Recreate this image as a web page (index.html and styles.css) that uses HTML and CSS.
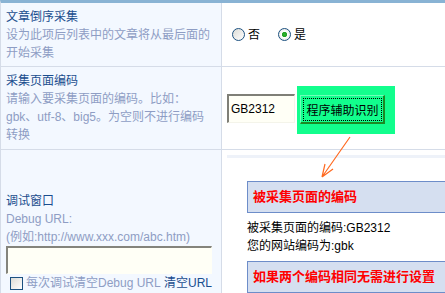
FILE: index.html
```html
<!DOCTYPE html>
<html lang="zh-CN">
<head>
    <meta charset="UTF-8">
    <title>采集设置</title>
    <link rel="stylesheet" href="styles.css">
</head>
<body>
    <div class="wrap">
        <table class="config">
            <tr class="row-reverse">
                <td class="label">
                    <div class="title">文章倒序采集</div>
                    <div class="desc">设为此项后列表中的文章将从最后面的开始采集</div>
                </td>
                <td class="field">
                    <div class="radios">
                        <label class="opt"><input type="radio" name="reverse">否</label>
                        <label class="opt"><input type="radio" name="reverse" checked>是</label>
                    </div>
                </td>
            </tr>
            <tr class="row-charset">
                <td class="label">
                    <div class="title">采集页面编码</div>
                    <div class="desc">请输入要采集页面的编码。比如：gbk、utf-8、big5。为空则不进行编码转换</div>
                </td>
                <td class="field">
                    <div class="charset">
                        <input type="text" class="charset-input" value="GB2312">
                        <span class="detect"><button type="button"><span>程序辅助识别</span></button></span>
                    </div>
                </td>
            </tr>
            <tr class="row-debug">
                <td class="label">
                    <div class="title">调试窗口</div>
                    <div class="desc">Debug URL:<br>(例如:http://www.xxx.com/abc.htm)</div>
                    <textarea class="debug-url"></textarea>
                    <div class="debug-opts">
                        <label class="check"><input type="checkbox">每次调试清空Debug URL</label>
                        <a href="#" class="clear">清空URL</a>
                    </div>
                </td>
                <td class="field">
                    <div class="result">
                        <div class="notice">被采集页面的编码</div>
                        <p>被采集页面的编码:GB2312<br>您的网站编码为:gbk</p>
                        <div class="notice">如果两个编码相同无需进行设置</div>
                    </div>
                </td>
            </tr>
        </table>
        <svg class="arrow" width="36" height="46" viewBox="0 0 36 46">
            <path d="M32 3 L4 43 M4 43 L7 30 M4 43 L15 35 M4 43 L11 33" stroke="#ff6a21" stroke-width="1.2" fill="none"/>
        </svg>
    </div>
</body>
</html>
```

FILE: styles.css
```css
body {
  margin: 0;
  overflow: hidden;
  background-color: #fff;
  font-family: "Liberation Sans", "Noto Sans CJK SC", sans-serif;
  font-size: 12px;
}

.wrap {
  position: relative;
}

.config {
  width: 100%;
  table-layout: fixed;
  border-spacing: 0;
  border-top: 3px solid #89b3d4;
  border-left: 1px solid #d5dce8;
}

.config td {
  padding: 0 5px;
  line-height: 18px;
  vertical-align: middle;
  border-bottom: 1px solid #d5dce8;
}

.config .field {
  padding-right: 0;
}

.config .label {
  width: 206px;
  padding-right: 9px;
  background-color: #f3f8ff;
  border-right: 1px solid #d5dce8;
}

.row-reverse td {
  height: 63px;
}

.row-charset td {
  height: 82px;
}

.row-debug td {
  vertical-align: top;
  border-bottom: none;
}

.row-debug .label {
  padding-top: 42px;
  height: 110px;
}

.row-debug .field {
  padding-top: 5px;
}

.title {
  color: #1a4d8e;
}

.desc {
  color: #8e9dc4;
}

/* radios */
.radios {
  display: flex;
  align-items: center;
}

.opt {
  display: flex;
  align-items: center;
  margin-right: 13px;
  color: #000;
}

input[type="radio"], input[type="checkbox"] {
  appearance: none;
  -webkit-appearance: none;
  width: 13px;
  height: 13px;
  margin: 0;
  box-sizing: border-box;
  border: 1px solid #1c5180;
  background: linear-gradient(135deg, #dcdcd6, #ffffff);
}

input[type="radio"] {
  border-radius: 50%;
  margin: 0 3px 0 5px;
}

input[type="radio"]:checked {
  background: radial-gradient(circle, #2fb52f 0, #21a121 2.2px, #ffffff 3px, #dcdcd6 100%);
}

/* charset row */
.charset {
  display: flex;
  align-items: center;
}

.charset-input {
  width: 68px;
  height: 29px;
  box-sizing: border-box;
  padding: 0 0 0 2px;
  margin: 0;
  border-style: solid;
  border-width: 2px 1px 1px 2px;
  border-color: #7f7f77 #f4f4ea #f4f4ea #7f7f77;
  background-color: #fffff6;
  font-family: "Liberation Sans", sans-serif;
  font-size: 12px;
  color: #000;
}

.detect {
  display: block;
  margin: 3px 0 0 2px;
  padding: 9px 10px 10px 3px;
  background-color: #12fe8d;
}

.detect button {
  display: block;
  width: 85px;
  height: 29px;
  box-sizing: border-box;
  padding: 2px 1px 1px 2px;
  border-style: solid;
  border-width: 1px 2px 2px 1px;
  border-color: #6effb9 #1b8a23 #1b8a23 #6effb9;
  background-color: #12fe8d;
  font-family: "Noto Sans CJK SC", sans-serif;
  font-size: 12px;
  color: #000;
}

.detect button span {
  display: flex;
  align-items: center;
  justify-content: center;
  height: 100%;
  box-sizing: border-box;
  border: 1px dotted #000;
}

/* debug row */
.debug-url {
  display: block;
  width: 206px;
  height: 28px;
  box-sizing: border-box;
  margin: 0;
  resize: none;
  border-style: solid;
  border-width: 2px 1px 1px 2px;
  border-color: #84847c #fffff6 #fffff6 #84847c;
  background-color: #fffff6;
}

.debug-opts {
  display: flex;
  align-items: center;
}

.check {
  display: flex;
  align-items: center;
  color: #8e9dc4;
}

.check input {
  margin: 0 3px 0 4px;
}

.clear {
  margin-left: auto;
  color: #1a4d8e;
  text-decoration: none;
}

.result {
  border-top: 3px solid #eef2f9;
  margin-left: 5px;
  padding: 23px 0 0 20px;
}

.row-debug .field {
  padding-left: 0;
}

.notice {
  height: 30px;
  line-height: 30px;
  padding-left: 5px;
  border: 1px solid #6d8dc9;
  border-right: none;
  background-color: #d5dff0;
  color: #ff0000;
  font-weight: bold;
  font-size: 13px;
}

.result p {
  margin: 6px 0;
  color: #000;
}

.arrow {
  position: absolute;
  left: 318px;
  top: 134px;
}
```
